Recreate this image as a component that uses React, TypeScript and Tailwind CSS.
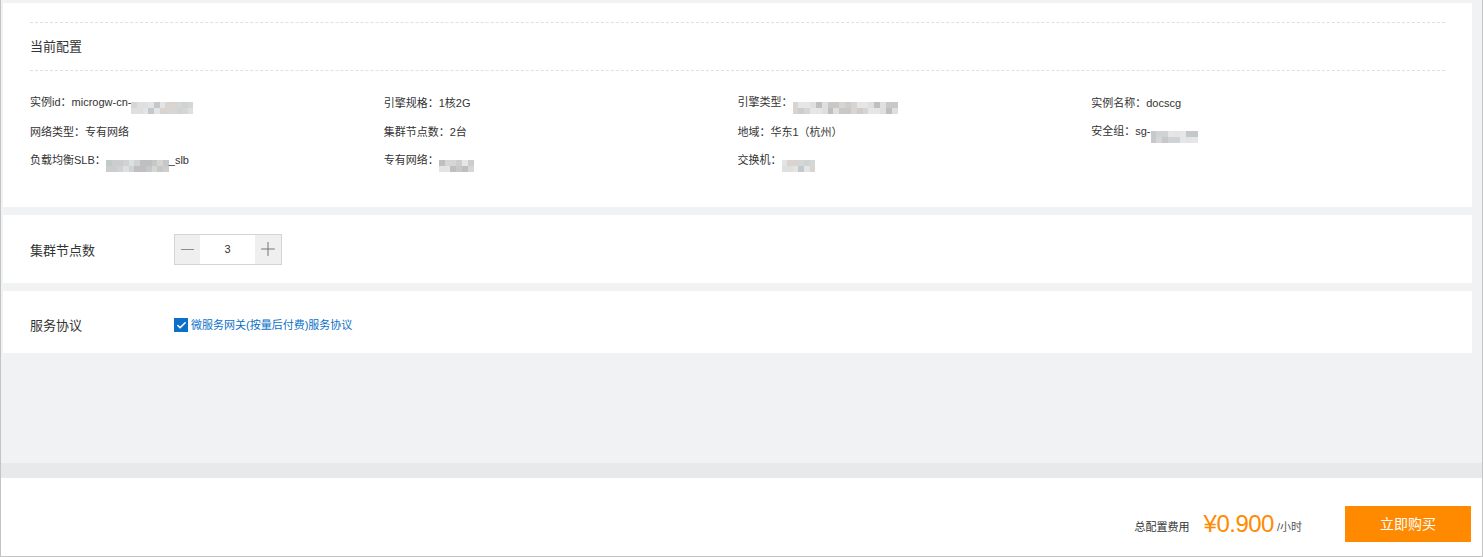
import { Check, Minus, Plus } from 'lucide-react';

const greys = ['#cdcdcd', '#dfdfdf', '#c3c8cb', '#d6d6d6', '#e6e6e6', '#bfbfbf', '#d9d4cf', '#ced3d6', '#e2e4e5', '#c8c8c8'];

function Mosaic({ width, seed = 1 }: { width: number; seed?: number }) {
  const cols = Math.ceil(width / 6);
  const cells = Array.from({ length: cols * 2 }, (_, i) => greys[(i * 7 + seed * 3 + ((i * i) % 5)) % greys.length]);
  return (
    <span
      className="inline-grid h-[12px] align-[-2px]"
      style={{ width, gridTemplateColumns: `repeat(${cols}, 1fr)` }}
    >
      {cells.map((c, i) => (
        <span key={i} style={{ background: c }} />
      ))}
    </span>
  );
}

type Cell = { label: string; value: React.ReactNode };

const rows: Cell[][] = [
  [
    { label: '实例id：', value: <>microgw-cn-<Mosaic width={62} seed={1} /></> },
    { label: '引擎规格：', value: '1核2G' },
    { label: '引擎类型：', value: <Mosaic width={105} seed={2} /> },
    { label: '实例名称：', value: 'docscg' },
  ],
  [
    { label: '网络类型：', value: '专有网络' },
    { label: '集群节点数：', value: '2台' },
    { label: '地域：', value: '华东1（杭州）' },
    { label: '安全组：', value: <>sg-<Mosaic width={47} seed={3} /></> },
  ],
  [
    { label: '负载均衡SLB：', value: <><Mosaic width={63} seed={4} />_slb</> },
    { label: '专有网络：', value: <Mosaic width={35} seed={5} /> },
    { label: '交换机：', value: <Mosaic width={34} seed={6} /> },
    { label: '', value: '' },
  ],
];

export default function App() {
  return (
    <div className="flex h-[557px] w-full flex-col border-x border-b border-[#c4c4c4] bg-[#f1f2f4] font-['Liberation_Sans','Noto_Sans_CJK_SC',sans-serif] text-[#333]">
      <div className="flex flex-1 flex-col gap-2 pl-[2px] pr-[10px] pt-[3px]">
        <section className="h-[204px] bg-white px-[27px] pt-[19px]">
          <div className="border-t border-dashed border-[#e0e0e0]" />
          <div className="flex h-[47px] items-center text-[13px]">当前配置</div>
          <div className="border-t border-dashed border-[#e0e0e0]" />
          <div className="pt-[18px]">
            {rows.map((row, r) => (
              <div key={r} className="grid h-[29px] grid-cols-4 items-center text-[11px]">
                {row.map((cell, c) => (
                  <div key={c} className="whitespace-nowrap">
                    {cell.label}
                    {cell.value}
                  </div>
                ))}
              </div>
            ))}
          </div>
        </section>

        <section className="flex h-[68px] items-center bg-white px-[27px]">
          <div className="w-[144px] pt-[3px] text-[13px]">集群节点数</div>
          <div className="flex h-[31px] w-[108px] border border-[#d4d4d4]">
            <button className="flex w-[25px] items-center justify-center bg-[#efefef] text-[#888]">
              <Minus className="h-[21px] w-[21px]" strokeWidth={1.1} />
            </button>
            <div className="flex flex-1 items-center justify-center text-[11px]">3</div>
            <button className="flex w-[26px] items-center justify-center bg-[#efefef] text-[#777]">
              <Plus className="h-[22px] w-[22px]" strokeWidth={1.1} />
            </button>
          </div>
        </section>

        <section className="flex h-[62px] items-center bg-white px-[27px] pt-[6px]">
          <div className="w-[144px] pt-[2px] text-[13px]">服务协议</div>
          <label className="flex items-center gap-[3px] text-[11px] text-[#0a70c8]">
            <span className="flex h-[14px] w-[14px] items-center justify-center bg-[#0a70c8]">
              <Check className="h-[11px] w-[11px] text-white" strokeWidth={3.5} />
            </span>
            微服务网关(按量后付费)服务协议
          </label>
        </section>
      </div>

      <div className="h-[15px] bg-[#e8e9eb]" />

      <footer className="flex h-[78px] items-start justify-end bg-white pr-[11px] pt-[28px]">
        <div className="flex h-[36px] items-center">
          <span className="mt-[6px] text-[11px] text-[#333]">总配置费用</span>
          <span className="ml-[14px] text-[24px] leading-[24px] tracking-[-0.5px] text-[#ff8a00]">¥0.900</span>
          <span className="ml-[3px] mt-[6px] text-[11px] text-[#555]">/小时</span>
          <button className="ml-[43px] h-[36px] w-[126px] bg-[#ff8a00] text-[14px] text-white">立即购买</button>
        </div>
      </footer>
    </div>
  );
}
